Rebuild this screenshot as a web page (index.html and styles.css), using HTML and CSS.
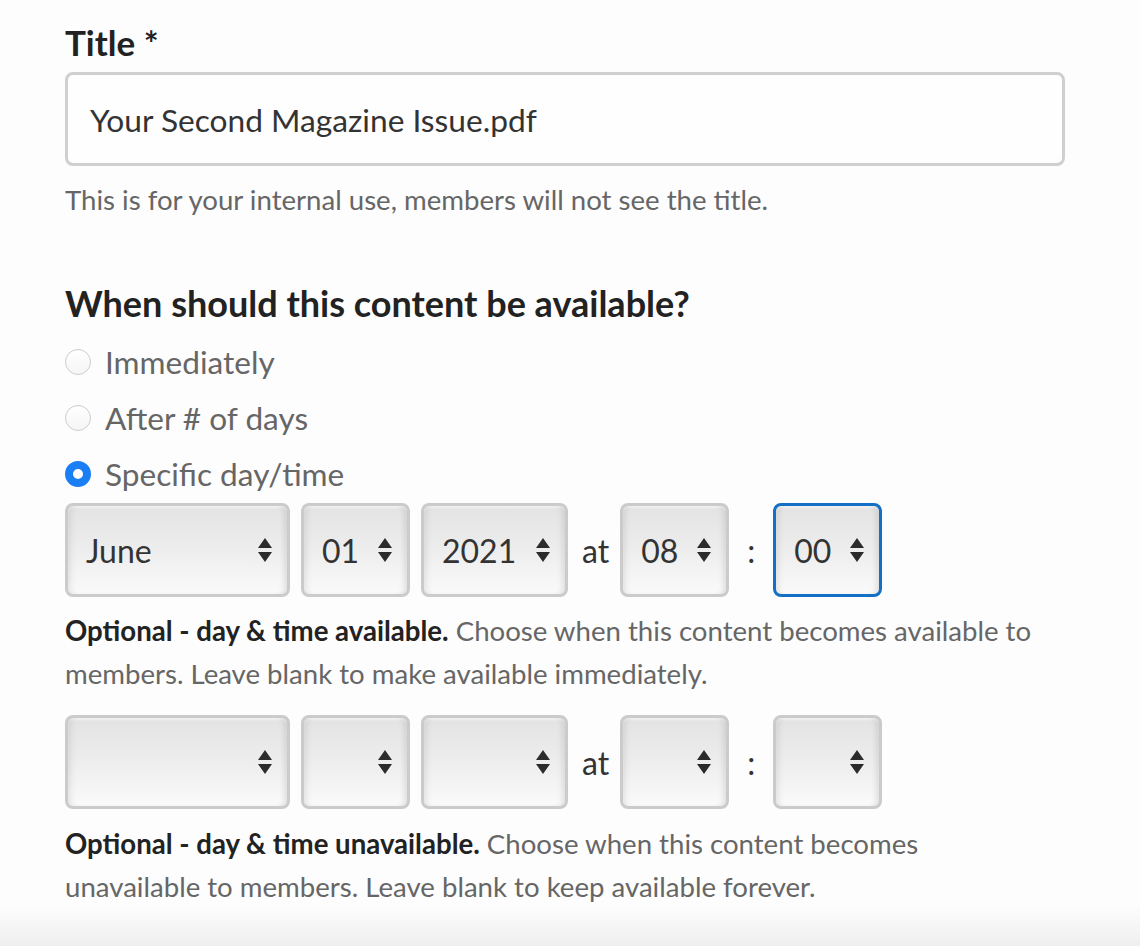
FILE: index.html
```html
<!DOCTYPE html>
<html lang="en">
<head>
<meta charset="utf-8">
<title>Content availability</title>
<link rel="stylesheet" href="styles.css">
</head>
<body>
<main class="form">
  <label class="field-label">Title *</label>
  <div class="text-input">Your Second Magazine Issue.pdf</div>
  <p class="help">This is for your internal use, members will not see the title.</p>

  <h2 class="section-title">When should this content be available?</h2>
  <ul class="radios">
    <li class="radio-row"><span class="radio"></span><span class="radio-label">Immediately</span></li>
    <li class="radio-row"><span class="radio"></span><span class="radio-label">After # of days</span></li>
    <li class="radio-row"><span class="radio checked"></span><span class="radio-label">Specific day/time</span></li>
  </ul>

  <div class="datetime first">
    <div class="select w-month"><span class="val">June</span><svg class="arrows" viewBox="0 0 14 24"><path d="M7 0 L14 10 L0 10 Z M0 14 L14 14 L7 24 Z"/></svg></div>
    <div class="select w-day"><span class="val">01</span><svg class="arrows" viewBox="0 0 14 24"><path d="M7 0 L14 10 L0 10 Z M0 14 L14 14 L7 24 Z"/></svg></div>
    <div class="select w-year"><span class="val">2021</span><svg class="arrows" viewBox="0 0 14 24"><path d="M7 0 L14 10 L0 10 Z M0 14 L14 14 L7 24 Z"/></svg></div>
    <span class="sep at">at</span>
    <div class="select w-day"><span class="val">08</span><svg class="arrows" viewBox="0 0 14 24"><path d="M7 0 L14 10 L0 10 Z M0 14 L14 14 L7 24 Z"/></svg></div>
    <span class="sep colon">:</span>
    <div class="select w-day focused"><span class="val">00</span><svg class="arrows" viewBox="0 0 14 24"><path d="M7 0 L14 10 L0 10 Z M0 14 L14 14 L7 24 Z"/></svg></div>
  </div>
  <p class="note"><strong>Optional - day &amp; time available.</strong> Choose when this content becomes available to members. Leave blank to make available immediately.</p>

  <div class="datetime second">
    <div class="select w-month"><span class="val"></span><svg class="arrows" viewBox="0 0 14 24"><path d="M7 0 L14 10 L0 10 Z M0 14 L14 14 L7 24 Z"/></svg></div>
    <div class="select w-day"><span class="val"></span><svg class="arrows" viewBox="0 0 14 24"><path d="M7 0 L14 10 L0 10 Z M0 14 L14 14 L7 24 Z"/></svg></div>
    <div class="select w-year"><span class="val"></span><svg class="arrows" viewBox="0 0 14 24"><path d="M7 0 L14 10 L0 10 Z M0 14 L14 14 L7 24 Z"/></svg></div>
    <span class="sep at">at</span>
    <div class="select w-day"><span class="val"></span><svg class="arrows" viewBox="0 0 14 24"><path d="M7 0 L14 10 L0 10 Z M0 14 L14 14 L7 24 Z"/></svg></div>
    <span class="sep colon">:</span>
    <div class="select w-day"><span class="val"></span><svg class="arrows" viewBox="0 0 14 24"><path d="M7 0 L14 10 L0 10 Z M0 14 L14 14 L7 24 Z"/></svg></div>
  </div>
  <p class="note"><strong>Optional - day &amp; time unavailable.</strong> Choose when this content becomes unavailable to members. Leave blank to keep available forever.</p>
</main>
</body>
</html>
```

FILE: styles.css
```css
html {
  min-height: 100%;
  background: linear-gradient(to bottom, #fdfdfd 0, #fdfdfd 905px, #efefef 946px);
  background-repeat: no-repeat;
  background-color: #efefef;
}

body {
  margin: 0;
  font-family: Lato, "Open Sans", sans-serif;
  color: #333;
  height: 946px;
  overflow: hidden;
}

.form {
  padding: 22px 0 0 65px;
  width: 1000px;
}

.field-label {
  display: block;
  font-size: 35px;
  font-weight: 700;
  line-height: 40px;
  color: #222;
}

.text-input {
  margin-top: 10px;
  box-sizing: border-box;
  width: 1000px;
  height: 94px;
  border: 3px solid #cfcfcf;
  border-radius: 8px;
  background: #fefefe;
  padding: 0 22px;
  font-size: 31.7px;
  line-height: 90px;
  color: #333;
}

.help {
  margin: 14px 0 0;
  font-size: 27.6px;
  line-height: 40px;
  color: #666;
}

.section-title {
  margin: 63px 0 0;
  font-size: 36px;
  font-weight: 700;
  line-height: 40px;
  color: #222;
}

.radios {
  list-style: none;
  margin: 11px 0 0;
  padding: 0;
}

.radio-row {
  display: flex;
  align-items: center;
  height: 56px;
  gap: 14px;
}

.radio {
  box-sizing: border-box;
  width: 26px;
  height: 26px;
  border-radius: 50%;
  border: 1px solid #cdcdcd;
  background: linear-gradient(#ffffff, #f5f5f5);
  flex: none;
}

.radio.checked {
  border: 8px solid #1a7ef5;
  background: #fff;
}

.radio-label {
  font-size: 31.6px;
  color: #666;
}

.datetime {
  display: flex;
  align-items: center;
  gap: 11px;
}

.datetime.first { margin-top: 1px; }
.datetime.second { margin-top: 20px; }

.select {
  box-sizing: border-box;
  height: 94px;
  border: 3px solid #cbcbcb;
  border-radius: 8px;
  background: linear-gradient(to bottom, #e3e3e3 0%, #ececec 45%, #fafafa 100%);
  box-shadow: inset 6px 0 6px -4px rgba(0, 0, 0, 0.10), inset -6px 0 6px -4px rgba(0, 0, 0, 0.12), inset 0 2px 2px rgba(255,255,255,0.6);
  display: flex;
  align-items: center;
  justify-content: space-between;
  padding: 0 15px 0 18px;
  font-size: 32px;
  color: #333;
}

.select.focused {
  border-color: #1470c4;
}

.w-month { width: 225px; }
.w-day { width: 109px; }
.w-year { width: 147px; }

.arrows {
  width: 14px;
  height: 26px;
  fill: #2b2b2b;
  flex: none;
}

.sep {
  font-size: 32px;
  color: #333;
}

.sep.at { padding: 0 0 0 3px; }
.sep.colon { width: 22px; text-align: center; }

.note {
  margin: 12px 0 0;
  width: 990px;
  font-size: 27.6px;
  line-height: 43px;
  color: #666;
}

.note strong {
  color: #222;
  font-weight: 700;
}

.datetime.second + .note { margin-top: 13px; }
```
